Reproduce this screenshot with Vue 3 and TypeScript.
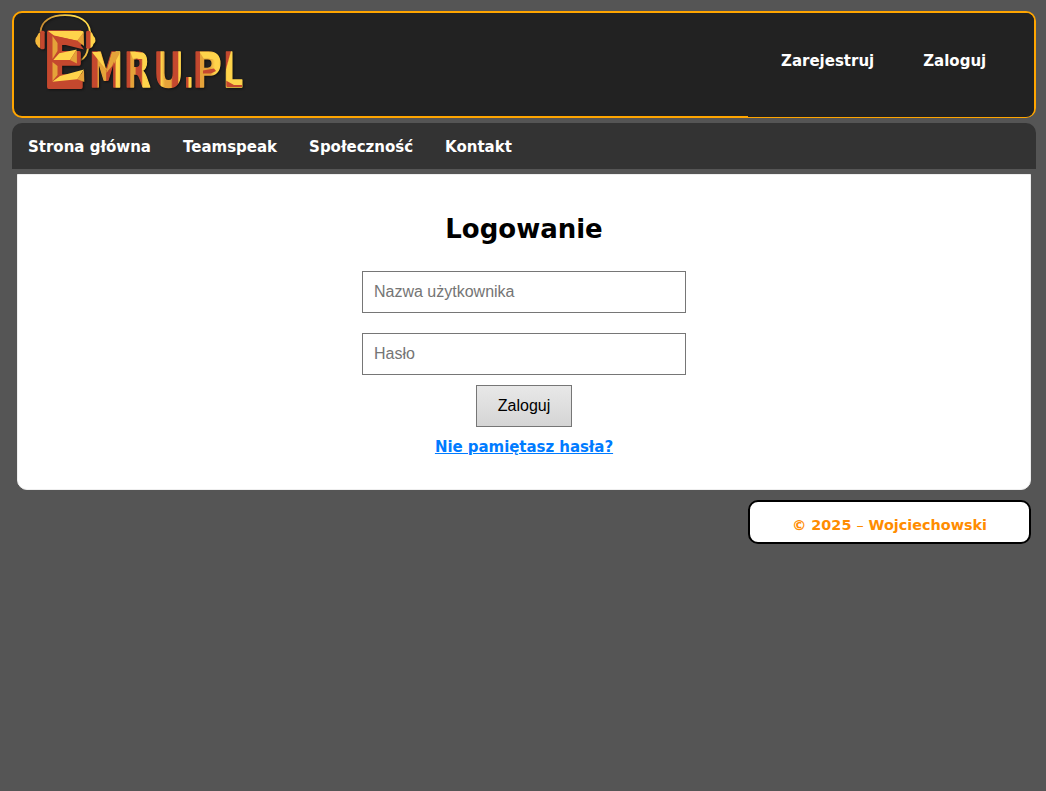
<script setup lang="ts">
const account: string[] = ['Zarejestruj', 'Zaloguj']
const pages: string[] = ['Strona główna', 'Teamspeak', 'Społeczność', 'Kontakt']

interface Letter { ch: string; x: number; w: number; fill: string }
const letters: Letter[] = [
  { ch: 'M', x: 55.2, w: 33.6, fill: 'url(#gm)' },
  { ch: 'R', x: 90, w: 26.5, fill: 'url(#gr)' },
  { ch: 'U', x: 119.6, w: 30.2, fill: 'url(#gu)' },
  { ch: '.', x: 149.8, w: 10, fill: 'url(#gd)' },
  { ch: 'P', x: 158.4, w: 29, fill: 'url(#gp)' },
  { ch: 'L', x: 189.5, w: 19.3, fill: 'url(#gl)' },
]
</script>

<template>
  <div class="page">
    <header class="header">
      <svg class="logo" width="220" height="84" viewBox="0 0 220 84" role="img" aria-label="Emru.pl">
        <defs>
          <linearGradient id="gm" gradientUnits="userSpaceOnUse" x1="57" x2="87"><stop offset=".2" stop-color="#c4482e" /><stop offset=".24" stop-color="#e5a339" /><stop offset=".5" stop-color="#e5a339" /><stop offset=".52" stop-color="#c4482e" /><stop offset=".8" stop-color="#c4482e" /><stop offset=".84" stop-color="#ffd44b" /></linearGradient>
          <linearGradient id="gr" gradientUnits="userSpaceOnUse" x1="92" x2="116"><stop offset=".16" stop-color="#c4482e" /><stop offset=".2" stop-color="#e5a339" /><stop offset=".38" stop-color="#e5a339" /><stop offset=".42" stop-color="#c4482e" /><stop offset=".64" stop-color="#c4482e" /><stop offset=".7" stop-color="#ffd44b" /></linearGradient>
          <linearGradient id="gu" gradientUnits="userSpaceOnUse" x1="122" x2="148"><stop offset=".15" stop-color="#c4482e" /><stop offset=".2" stop-color="#ffd44b" /><stop offset=".35" stop-color="#e5a339" /><stop offset=".58" stop-color="#e5a339" /><stop offset=".64" stop-color="#c4482e" /><stop offset=".83" stop-color="#c4482e" /><stop offset=".88" stop-color="#ffd44b" /></linearGradient>
          <linearGradient id="gd" gradientUnits="userSpaceOnUse" x1="151" x2="158"><stop offset=".45" stop-color="#c4482e" /><stop offset=".55" stop-color="#ffd44b" /></linearGradient>
          <linearGradient id="gp" gradientUnits="userSpaceOnUse" x1="161" x2="186"><stop offset=".18" stop-color="#c4482e" /><stop offset=".22" stop-color="#e5a339" /><stop offset=".6" stop-color="#e5a339" /><stop offset=".8" stop-color="#ffd44b" /></linearGradient>
          <linearGradient id="gl" gradientUnits="userSpaceOnUse" x1="191" x2="209" y1="45" y2="50"><stop offset=".18" stop-color="#c4482e" /><stop offset=".24" stop-color="#ffd44b" /></linearGradient>
          <linearGradient id="band"><stop stop-color="#c78a31" /><stop offset=".65" stop-color="#ffd94b" /></linearGradient>
          <clipPath id="lettering"><text v-for="l in letters" :key="l.ch" :x="l.x" y="74.4" class="small" :textLength="l.w" lengthAdjust="spacingAndGlyphs">{{ l.ch }}</text></clipPath>
        </defs>
        <g class="shadow">
          <path d="M6.5 19C7 8 17 2.2 31 2.2S55.5 8 56 19" fill="none" stroke="url(#band)" stroke-width="1.8" />
          <path d="M54 35Q53 44 46.5 47.2" fill="none" stroke="#eebc43" stroke-width="2" />
          <path d="M6.5 19Q4 20 3.2 23Q1 25 1.2 28Q1.5 31 3 32Q4 35 6.5 35Z" fill="#f4b83c" />
          <path d="M56 18Q59 20 59.5 23Q62 25 61.5 28Q61 30 59.5 31Q58.5 35 56 35Z" fill="#ffd44b" />
          <rect x="6.2" y="17.7" width="4.5" height="18.5" rx="1.5" fill="#c4482e" />
          <rect x="52" y="17.7" width="4.5" height="18" rx="1.5" fill="#c4482e" />
        </g>
        <g class="shadow">
          <text x="9" y="73.5" class="big" textLength="42.6" lengthAdjust="spacingAndGlyphs" fill="#c4482e" stroke="#c4482e">E</text>
          <path d="M14 18H48.5Q50 18 49.5 20L43.3 27.7L20 22.4Z" fill="#ffd44b" />
          <path d="M49.7 19L50 33L43.3 27.7Z" fill="#e5a339" />
          <path d="M19.3 22.7L43.3 27.7L50 36.5L23.5 30Z" fill="#c4482e" />
          <path d="M18.5 23L23.5 30V38L18.5 46ZM18.5 49L23.5 53V62L18.5 68Z" fill="#e5a339" />
          <path d="M19.3 47L25.3 40.3L42.7 36.6L36 47Z" fill="#ffd44b" />
          <path d="M42.9 36.8V50.5L36 47Z" fill="#e5a339" />
          <path d="M18.3 68.7L26 63L50 56.6L43.3 66.3Z" fill="#ffd44b" />
          <path d="M50 57L50.3 69L43.3 66.3Z" fill="#e5a339" />
          <text v-for="l in letters" :key="l.ch" :x="l.x" y="74.4" class="small" :textLength="l.w" lengthAdjust="spacingAndGlyphs" :fill="l.fill" :stroke="l.fill">{{ l.ch }}</text>
          <g clip-path="url(#lettering)">
            <path d="M57 38H68L74 59Z" fill="#ffd44b" />
            <path d="M87 38H78L72 60L80 51Z" fill="#e5a339" />
            <path d="M96 38H108L117 44L113 59L108 57L110 46H99Z" fill="#ffd44b" />
            <path d="M165 38H180L187 45L184 52L179 46H170Z" fill="#ffd44b" />
            <path d="M169 60.5H177L182 58L180 55.5L169 57.5Z" fill="#c4482e" />
            <path d="M191 67L200 72H210V77H193Z" fill="#c4482e" />
          </g>
        </g>
      </svg>
      <nav class="account">
        <a v-for="label in account" :key="label">{{ label }}</a>
      </nav>
    </header>
    <nav class="menu">
      <a v-for="label in pages" :key="label">{{ label }}</a>
    </nav>
    <main class="panel">
      <h1>Logowanie</h1>
      <form @submit.prevent>
        <input type="text" placeholder="Nazwa użytkownika">
        <input type="password" placeholder="Hasło">
        <button type="submit">Zaloguj</button>
      </form>
      <a class="forgot" href="#">Nie pamiętasz hasła?</a>
    </main>
    <footer>© 2025 <span class="dash">–</span> Wojciechowski</footer>
  </div>
</template>

<style>
html, body { background: #555; }
</style>
<style scoped>
* { box-sizing: border-box; }
.page { display: flex; flex-direction: column; padding: 11px 10px 0 12px; font: bold 15px/22px Verdana, "DejaVu Sans", sans-serif; }
.header { display: flex; justify-content: space-between; height: 107px; border: 2px solid orange; border-radius: 10px; background: #222; }
.logo { margin-left: 20px; overflow: visible; }
.shadow { filter: drop-shadow(1.5px 1.5px 1px #111); }
.big { font: bold 74px "DejaVu Sans", sans-serif; stroke-width: 4px; stroke-linejoin: round; }
.small { font: bold 48px "DejaVu Sans", sans-serif; stroke-width: 1.6px; stroke-linejoin: round; }
.account { display: flex; gap: 49px; width: 286px; height: 104px; padding: 37px 0 0 33px; background: #222; border-radius: 0 8px 8px 0; }
.account, .menu { color: #fff; white-space: nowrap; }
.menu { display: flex; gap: 32px; height: 46px; margin-top: 5px; padding: 13px 16px 11px; background: #333; border-radius: 10px 10px 0 0; }
.panel { display: flex; flex-direction: column; align-items: center; height: 316px; margin: 5px 5px 0; background: #fff; border: 1px solid #eee; border-radius: 0 0 10px 10px; }
h1 { margin: 38px 0 26px; font-size: 26px; line-height: 32px; }
form { display: flex; flex-direction: column; align-items: center; }
input { width: 324px; height: 42px; margin-bottom: 20px; padding: 10px 11px; border: 1px solid #767676; border-radius: 0; background: #fff; font: 16px "Liberation Sans", Arial, sans-serif; }
input::placeholder { color: #757575; opacity: 1; }
button { width: 96px; height: 42px; margin-top: -10px; border: 1px solid #767676; background: linear-gradient(#e8e8e8, #d5d5d5); color: #000; font: 16px "Liberation Sans", Arial, sans-serif; }
.forgot { margin-top: 9px; color: #007bff; letter-spacing: -.05px; }
footer { align-self: flex-end; width: 283px; height: 44px; margin: 10px 5px 0 0; padding-top: 12px; border: 2px solid #000; border-radius: 10px; background: #fff; color: #ff8c00; font-size: 14.4px; text-align: center; }
.dash { font-weight: normal; }
</style>
